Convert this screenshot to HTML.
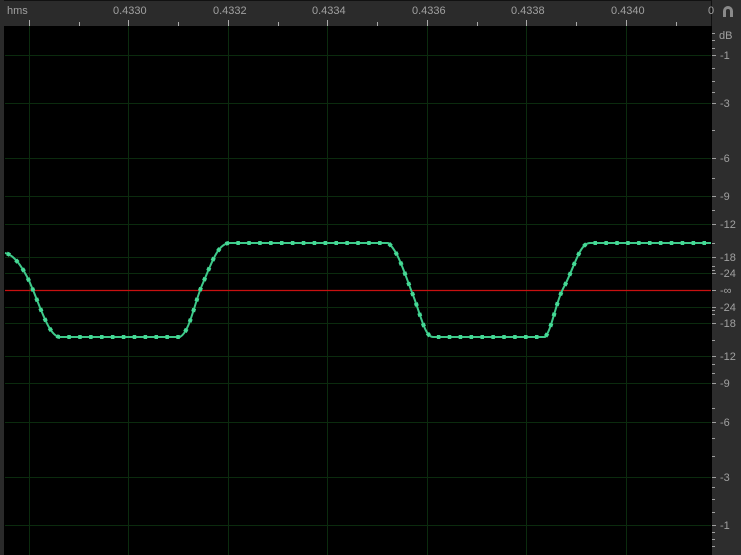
<!DOCTYPE html>
<html><head><meta charset="utf-8"><style>
body{margin:0;width:741px;height:555px;background:#000;overflow:hidden;font-family:"Liberation Sans",sans-serif;}
</style></head><body>
<svg width="741" height="555" xmlns="http://www.w3.org/2000/svg" style="position:absolute;left:0;top:0">
<rect x="0" y="0" width="741" height="555" fill="#000"/>
<rect x="0" y="0" width="4" height="555" fill="#2a2a2a"/>
<rect x="0" y="0" width="712" height="26" fill="#2b2b2b"/>
<rect x="4" y="0" width="708" height="1" fill="#111"/>
<rect x="712" y="0" width="29" height="555" fill="#2d2d2d"/>
<rect x="711" y="0" width="1" height="26" fill="#111"/>
<g fill="#a0a0a0" font-size="11">
<text x="7" y="14">hms</text>
<text x="113" y="14">0.4330</text>
<text x="213" y="14">0.4332</text>
<text x="312" y="14">0.4334</text>
<text x="412" y="14">0.4336</text>
<text x="511" y="14">0.4338</text>
<text x="611" y="14">0.4340</text>
<text x="708" y="14">0</text>
</g>
<g fill="#aaa">
<rect x="29" y="20" width="1" height="6"/><rect x="79" y="22" width="1" height="4"/>
<rect x="128" y="20" width="1" height="6"/><rect x="178" y="22" width="1" height="4"/>
<rect x="228" y="20" width="1" height="6"/><rect x="278" y="22" width="1" height="4"/>
<rect x="327" y="20" width="1" height="6"/><rect x="377" y="22" width="1" height="4"/>
<rect x="427" y="20" width="1" height="6"/><rect x="477" y="22" width="1" height="4"/>
<rect x="526" y="20" width="1" height="6"/><rect x="576" y="22" width="1" height="4"/>
<rect x="626" y="20" width="1" height="6"/><rect x="676" y="22" width="1" height="4"/>
</g>
<g stroke="#0b2b0e" stroke-width="1">
<line x1="29.5" y1="26" x2="29.5" y2="555"/><line x1="128.5" y1="26" x2="128.5" y2="555"/>
<line x1="228.5" y1="26" x2="228.5" y2="555"/><line x1="327.5" y1="26" x2="327.5" y2="555"/>
<line x1="427.5" y1="26" x2="427.5" y2="555"/><line x1="526.5" y1="26" x2="526.5" y2="555"/>
<line x1="626.5" y1="26" x2="626.5" y2="555"/>
<line x1="5" y1="55.5" x2="711" y2="55.5"/><line x1="5" y1="103.5" x2="711" y2="103.5"/>
<line x1="5" y1="158.5" x2="711" y2="158.5"/><line x1="5" y1="196.5" x2="711" y2="196.5"/>
<line x1="5" y1="224.5" x2="711" y2="224.5"/><line x1="5" y1="257.5" x2="711" y2="257.5"/>
<line x1="5" y1="273.5" x2="711" y2="273.5"/><line x1="5" y1="307.5" x2="711" y2="307.5"/>
<line x1="5" y1="323.5" x2="711" y2="323.5"/><line x1="5" y1="356.5" x2="711" y2="356.5"/>
<line x1="5" y1="383.5" x2="711" y2="383.5"/><line x1="5" y1="422.5" x2="711" y2="422.5"/>
<line x1="5" y1="477.5" x2="711" y2="477.5"/><line x1="5" y1="525.5" x2="711" y2="525.5"/>
</g>
<line x1="5" y1="290.5" x2="711" y2="290.5" stroke="#c81010" stroke-width="1.2"/>
<path d="M5,253 C15,255 25,270 33,290 C42,312 50,337 60,337 L180,337 C190,332 195,300 203,283 C212,262 218,243 230,243 L388,243 C398,250 405,275 413,295 C421,316 425,337 433,337 L545,337 C552,330 556,300 565,285 C575,265 580,243 590,243 L711,243" fill="none" stroke="#3ec98a" stroke-width="2"/>
<path d="M5,253 C15,255 25,270 33,290 C42,312 50,337 60,337 L180,337 C190,332 195,300 203,283 C212,262 218,243 230,243 L388,243 C398,250 405,275 413,295 C421,316 425,337 433,337 L545,337 C552,330 556,300 565,285 C575,265 580,243 590,243 L711,243" fill="none" stroke="#45d995" stroke-width="4" stroke-dasharray="3.5 7.4" stroke-dashoffset="-2"/>
<g fill="#a0a0a0">
<rect x="712" y="33" width="3" height="1"/><rect x="712" y="40" width="3" height="1"/><rect x="712" y="48" width="3" height="1"/>
<rect x="712" y="55" width="4" height="1"/><rect x="712" y="68" width="3" height="1"/><rect x="712" y="81" width="3" height="1"/><rect x="712" y="92" width="3" height="1"/>
<rect x="712" y="103" width="4" height="1"/><rect x="712" y="130" width="3" height="1"/><rect x="712" y="158" width="4" height="1"/><rect x="712" y="178" width="3" height="1"/>
<rect x="712" y="196" width="4" height="1"/><rect x="712" y="210" width="3" height="1"/><rect x="712" y="224" width="4" height="1"/><rect x="712" y="243" width="3" height="1"/>
<rect x="712" y="257" width="4" height="1"/><rect x="712" y="266" width="3" height="1"/><rect x="712" y="270" width="3" height="1"/><rect x="712" y="273" width="4" height="1"/>
<rect x="712" y="290" width="4" height="1"/><rect x="712" y="307" width="4" height="1"/><rect x="712" y="310" width="3" height="1"/><rect x="712" y="314" width="3" height="1"/>
<rect x="712" y="323" width="4" height="1"/><rect x="712" y="340" width="3" height="1"/><rect x="712" y="356" width="4" height="1"/><rect x="712" y="364" width="3" height="1"/><rect x="712" y="373" width="3" height="1"/>
<rect x="712" y="383" width="4" height="1"/><rect x="712" y="408" width="3" height="1"/><rect x="712" y="422" width="4" height="1"/><rect x="712" y="438" width="3" height="1"/><rect x="712" y="456" width="3" height="1"/>
<rect x="712" y="477" width="4" height="1"/><rect x="712" y="487" width="3" height="1"/><rect x="712" y="499" width="3" height="1"/><rect x="712" y="512" width="3" height="1"/>
<rect x="712" y="525" width="4" height="1"/><rect x="712" y="532" width="3" height="1"/><rect x="712" y="539" width="3" height="1"/><rect x="712" y="546" width="3" height="1"/>
</g>
<g fill="#a0a0a0" font-size="11">
<text x="719" y="39">dB</text>
<text x="720" y="59">-1</text><text x="720" y="107">-3</text><text x="720" y="162">-6</text><text x="720" y="200">-9</text>
<text x="720" y="228">-12</text><text x="720" y="261">-18</text><text x="720" y="277">-24</text><text x="720" y="294">-∞</text>
<text x="720" y="311">-24</text><text x="720" y="327">-18</text><text x="720" y="360">-12</text><text x="720" y="387">-9</text>
<text x="720" y="426">-6</text><text x="720" y="481">-3</text><text x="720" y="529">-1</text>
</g>
<path d="M723,17 L723,11 A5,5 0 0 1 733,11 L733,17 L730,17 L730,11 A2,2 0 0 0 726,11 L726,17 Z" fill="#8a8a8a"/>
</svg>
</body></html>
